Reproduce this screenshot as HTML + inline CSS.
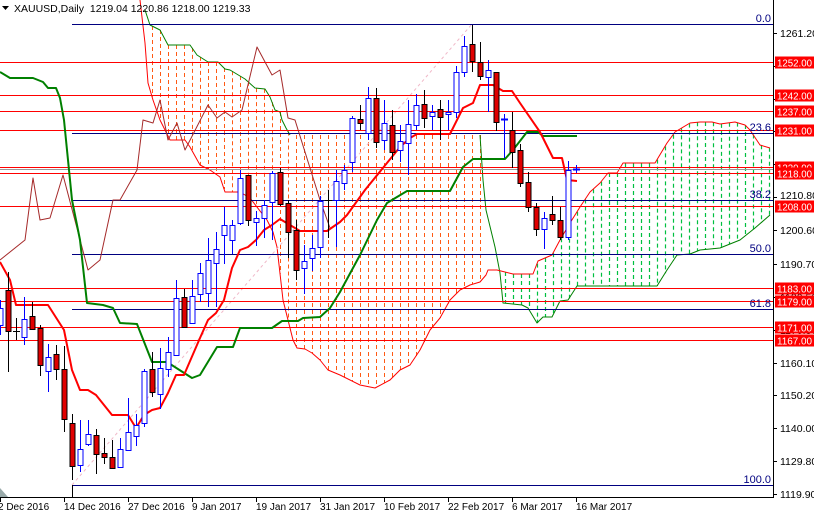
<!DOCTYPE html>
<html><head><meta charset="utf-8">
<style>
html,body{margin:0;padding:0;background:#fff;}
svg{display:block;font-family:"Liberation Sans",sans-serif;}
</style></head>
<body>
<svg id="s" width="814" height="514" viewBox="0 0 814 514" xmlns="http://www.w3.org/2000/svg">
<rect width="814" height="514" fill="#fff"/>
<g id="cloud"></g>
<line x1="72" y1="485" x2="472" y2="24" stroke="#f0b8c8" stroke-width="1" stroke-dasharray="3,3"/>
<g shape-rendering="crispEdges" stroke-width="1">
<line x1="72" y1="24.5" x2="773" y2="24.5" stroke="#000080"/>
<line x1="0" y1="62.5" x2="773" y2="62.5" stroke="#f00"/>
<line x1="0" y1="95.5" x2="773" y2="95.5" stroke="#f00"/>
<line x1="0" y1="111.5" x2="773" y2="111.5" stroke="#f00"/>
<line x1="0" y1="130.5" x2="773" y2="130.5" stroke="#f00"/>
<line x1="72" y1="133.5" x2="773" y2="133.5" stroke="#000080"/>
<line x1="0" y1="167.5" x2="773" y2="167.5" stroke="#f00"/>
<line x1="0" y1="169.5" x2="773" y2="169.5" stroke="#999"/>
<line x1="0" y1="173.5" x2="773" y2="173.5" stroke="#f00"/>
<line x1="72" y1="200.5" x2="773" y2="200.5" stroke="#000080"/>
<line x1="0" y1="206.5" x2="773" y2="206.5" stroke="#f00"/>
<line x1="72" y1="254.5" x2="773" y2="254.5" stroke="#000080"/>
<line x1="0" y1="288.5" x2="773" y2="288.5" stroke="#f00"/>
<line x1="0" y1="301.5" x2="773" y2="301.5" stroke="#f00"/>
<line x1="72" y1="309.5" x2="773" y2="309.5" stroke="#000080"/>
<line x1="0" y1="327.5" x2="773" y2="327.5" stroke="#f00"/>
<line x1="0" y1="340.5" x2="773" y2="340.5" stroke="#f00"/>
<line x1="72" y1="485.5" x2="773" y2="485.5" stroke="#000080"/>
<line x1="72.5" y1="485" x2="72.5" y2="497" stroke="#000"/>
</g>
<g id="lines" fill="none"></g>
<g id="candles"></g>
<g font-size="11" fill="#000080" text-anchor="end">
<text x="771" y="22">0.0</text>
<text x="771" y="131">23.6</text>
<text x="771" y="198">38.2</text>
<text x="771" y="252">50.0</text>
<text x="771" y="307">61.8</text>
<text x="771" y="483">100.0</text>
</g>
<g shape-rendering="crispEdges">
<rect x="773" y="0" width="41" height="514" fill="#fff"/>
<line x1="773.5" y1="0" x2="773.5" y2="497" stroke="#000"/>
<line x1="0" y1="497.5" x2="774" y2="497.5" stroke="#000"/>
</g>
<g id="ticks" stroke="#000" shape-rendering="crispEdges"></g>
<g font-size="10.5" fill="#000">
<text x="780" y="37">1261.20</text>
<text x="780" y="66">1251.30</text>
<text x="780" y="100">1241.10</text>
<text x="780" y="171">1220.80</text>
<text x="780" y="199">1210.80</text>
<text x="780" y="234">1200.60</text>
<text x="780" y="268">1190.70</text>
<text x="780" y="301">1180.50</text>
<text x="780" y="334">1170.30</text>
<text x="780" y="367">1160.10</text>
<text x="780" y="399">1150.20</text>
<text x="780" y="432">1140.00</text>
<text x="780" y="465">1129.80</text>
<text x="780" y="498">1119.90</text>
</g>
<g id="lab" font-size="10" fill="#fff"></g>
<g font-size="10" fill="#000">
<text x="-2" y="510">2 Dec 2016</text>
<text x="64" y="510">14 Dec 2016</text>
<text x="128" y="510">27 Dec 2016</text>
<text x="192" y="510">9 Jan 2017</text>
<text x="256" y="510">19 Jan 2017</text>
<text x="320" y="510">31 Jan 2017</text>
<text x="384" y="510">10 Feb 2017</text>
<text x="448" y="510">22 Feb 2017</text>
<text x="512" y="510">6 Mar 2017</text>
<text x="576" y="510">16 Mar 2017</text>
</g>
<polygon points="0,488 0,497 8,497" fill="#9aa"/>
<polygon points="2,6 9,6 5.5,10" fill="#000"/>
<text x="14" y="12" font-size="10.5" fill="#000">XAUUSD,Daily&#160; 1219.04 1220.86 1218.00 1219.33</text>
</svg>
<script>
var NS="http://www.w3.org/2000/svg";
function el(p,t,a){var e=document.createElementNS(NS,t);for(var k in a)e.setAttribute(k,a[k]);p.appendChild(e);return e;}
function pl(p,pts,c,w){return el(p,"polyline",{points:pts.map(function(q){return q.join(",")}).join(" "),stroke:c,"stroke-width":w,fill:"none","stroke-linejoin":"round"});}
function interp(pts,x){for(var i=0;i<pts.length-1;i++){var a=pts[i],b=pts[i+1];if(x>=a[0]&&x<=b[0]){if(b[0]==a[0])return a[1];return a[1]+(b[1]-a[1])*(x-a[0])/(b[0]-a[0]);}}return null;}
var cloud=document.getElementById("cloud"),lines=document.getElementById("lines"),cd=document.getElementById("candles");
var bTop=[[145,10],[150,25],[160,30],[168,45],[183,45],[190,45],[197,55],[208,62],[218,62],[225,69],[230,70],[240,76],[245,79],[255,88],[265,89],[270,97],[275,110],[280,112],[282,120],[286,128],[290,135],[480,135],[483,180],[486,210]];
var bBot=[[140,0],[145,43],[148,83],[153,100],[160,120],[170,140],[185,140],[190,147],[200,165],[210,170],[220,177],[225,192],[240,192],[250,198],[267,220],[273,232],[277,247],[283,300],[293,340],[297,348],[305,349],[312,353],[320,360],[328,370],[340,375],[360,385],[375,388],[390,380],[400,370],[410,365],[420,350],[430,330],[440,318],[450,300],[460,290],[470,285],[480,282],[486,275]];
for(var x=152;x<=480;x+=8){var t=interp(bTop,x),b=interp(bBot,x);if(t!=null&&b!=null)el(cloud,"line",{x1:x+.5,x2:x+.5,y1:Math.min(t,b),y2:Math.max(t,b),stroke:"#ff5a14","stroke-dasharray":"4,3"});}
var gTop=[[480,282],[488,270],[497,270],[513,274],[533,274],[538,261],[552,255],[560,240],[570,223],[580,207],[590,192],[600,183],[608,173],[617,173],[623,163],[655,163],[667,143],[675,132],[690,123],[700,122],[712,122],[720,124],[735,122],[745,125],[750,130],[760,145],[770,148]];
var gBot=[[485,207],[495,247],[500,273],[503,303],[522,305],[528,308],[537,323],[543,317],[552,317],[560,301],[568,300],[577,286],[657,286],[667,270],[677,255],[690,254],[700,250],[720,248],[740,240],[755,228],[770,215]];
for(var x=505;x<=769;x+=8){var t=interp(gTop,x),b=interp(gBot,x);if(t!=null&&b!=null)el(cloud,"line",{x1:x+.5,x2:x+.5,y1:Math.min(t,b),y2:Math.max(t,b),stroke:"#00c040","stroke-width":1.2,"stroke-dasharray":"4,3"});}
pl(cloud,bTop.slice(0,-3),"#008000",1);
pl(cloud,[[480,135],[483,180],[486,210],[495,247],[500,273],[503,303]].concat(gBot.slice(4)),"#008000",1);
pl(cloud,bBot.concat(gTop.slice(1)),"#ff0000",1);
pl(lines,[[0,260],[25,240],[33,178],[40,220],[50,218],[63,175],[88,270],[100,260],[113,200],[120,200],[137,170],[143,120],[153,123],[160,100],[168,140],[177,123],[185,150],[208,105],[217,118],[225,112],[232,117],[242,110],[257,47],[272,75],[280,70],[288,118],[295,120],[320,200],[330,228]],"#a52a2a",1);
pl(lines,[[0,72],[10,78],[33,78],[43,82],[48,88],[56,88],[60,98],[64,120],[68,160],[72,200],[80,240],[87,303],[103,305],[113,308],[120,323],[137,324],[152,362],[167,362],[192,378],[200,375],[217,347],[233,347],[240,328],[272,328],[282,321],[298,321],[303,318],[320,317],[330,308],[340,292],[360,255],[377,220],[387,203],[407,191],[450,191],[463,167],[473,159],[505,159],[513,150],[527,132],[538,132],[543,136],[577,136]],"#008000",2);
pl(lines,[[0,262],[10,280],[16,305],[48,305],[64,330],[72,370],[80,390],[88,390],[96,395],[112,415],[128,415],[136,428],[144,415],[152,410],[160,408],[168,393],[176,375],[184,375],[200,338],[208,320],[216,313],[224,300],[232,268],[240,250],[248,247],[256,240],[264,230],[272,225],[280,219],[300,231],[327,231],[340,222],[347,215],[365,190],[400,147],[410,138],[417,134],[450,134],[463,108],[473,103],[480,85],[493,85],[503,91],[512,91],[520,103],[540,132],[553,158],[562,158],[567,180],[577,181]],"#ff0000",2);
var C=[[0,308,325,300,335,"b"],[8,290,331,272,372,"r"],[16,331,331,318,340,"d"],[24,319,337,297,345,"b"],[32,316,329,302,330,"r"],[40,328,365,325,376,"r"],[48,357,371,344,392,"b"],[56,354,369,345,380,"r"],[64,369,419,346,432,"r"],[72,423,466,414,480,"r"],[80,449,465,420,472,"b"],[88,434,444,420,446,"b"],[96,435,454,429,474,"r"],[104,453,457,438,464,"r"],[112,457,468,440,469,"r"],[120,449,467,438,467,"b"],[128,432,450,398,450,"b"],[136,425,436,414,446,"b"],[144,371,423,369,427,"b"],[152,369,392,352,397,"r"],[160,368,394,348,409,"b"],[168,352,369,337,377,"b"],[176,298,355,280,355,"b"],[184,297,327,289,327,"r"],[192,296,323,280,324,"b"],[200,273,294,263,302,"b"],[208,260,293,238,307,"b"],[216,249,263,232,307,"b"],[224,225,235,207,264,"b"],[232,225,240,220,254,"b"],[240,178,223,170,225,"b"],[248,175,220,175,226,"r"],[256,218,222,211,246,"b"],[264,205,218,200,238,"b"],[272,173,202,171,240,"b"],[280,172,204,168,206,"r"],[288,203,232,200,258,"r"],[296,230,270,220,280,"r"],[304,261,268,245,294,"b"],[312,248,258,235,271,"b"],[320,201,247,196,258,"b"],[328,200,200,190,238,"d"],[336,181,200,170,247,"b"],[344,170,183,165,190,"b"],[352,118,162,116,172,"b"],[360,119,123,105,130,"r"],[368,98,133,87,140,"b"],[376,98,142,88,148,"r"],[384,123,140,100,150,"b"],[392,125,152,110,160,"r"],[400,141,150,125,162,"b"],[408,124,143,100,175,"b"],[416,105,125,94,130,"b"],[424,104,118,90,128,"r"],[432,112,116,105,130,"b"],[440,109,117,100,140,"r"],[448,112,114,100,130,"b"],[456,72,112,66,118,"b"],[464,46,72,36,77,"b"],[472,44,61,25,72,"r"],[480,62,76,42,80,"r"],[488,70,77,60,112,"b"],[496,72,122,72,131,"r"],[504,119,119,114,158,"bd"],[512,130,152,112,168,"r"],[520,150,183,144,187,"r"],[528,182,207,172,212,"r"],[536,207,229,203,236,"r"],[544,218,229,212,249,"b"],[552,214,220,196,225,"r"],[560,220,237,207,240,"r"],[568,170,237,161,240,"b"],[576,169,169,165,173,"bd"]];
C.forEach(function(c){var x=c[0],t=c[5];var col=(t=="b"||t=="bd")?"#0000ff":"#000";
el(cd,"line",{x1:x+.5,x2:x+.5,y1:c[3],y2:c[4],stroke:col,"shape-rendering":"crispEdges"});
if(t=="b")el(cd,"rect",{x:x-2,y:c[1]+.5,width:5,height:Math.max(1,c[2]-c[1]),fill:"#fff",stroke:"#0000ff","shape-rendering":"crispEdges"});
else if(t=="r")el(cd,"rect",{x:x-2,y:c[1]+.5,width:5,height:Math.max(1,c[2]-c[1]),fill:"#e00000",stroke:"#000","shape-rendering":"crispEdges"});
else el(cd,"line",{x1:x-3,x2:x+4,y1:c[1]+.5,y2:c[1]+.5,stroke:col,"stroke-width":(t=="bd"?2:1),"shape-rendering":"crispEdges"});});
var tk=document.getElementById("ticks");
[33,66,99,131,164,197,230,264,297,330,363,395,428,461,494].forEach(function(y){el(tk,"line",{x1:773,x2:777,y1:y+.5,y2:y+.5});});
for(var x=0;x<=576;x+=64)el(tk,"line",{x1:x+.5,x2:x+.5,y1:497,y2:502});
var lb=document.getElementById("lab");
[[62,"1252.00"],[95,"1242.00"],[111,"1237.00"],[130,"1231.00"],[167,"1220.00"],[173,"1218.00"],[206,"1208.00"],[288,"1183.00"],[301,"1179.00"],[327,"1171.00"],[340,"1167.00"]].forEach(function(a){
el(lb,"rect",{x:775,y:a[0]-5.5,width:39,height:12,fill:"#ff0000"});
var t=el(lb,"text",{x:777,y:a[0]+4.5,textLength:35,lengthAdjust:"spacingAndGlyphs"});t.textContent=a[1];});
</script>
</body></html>
